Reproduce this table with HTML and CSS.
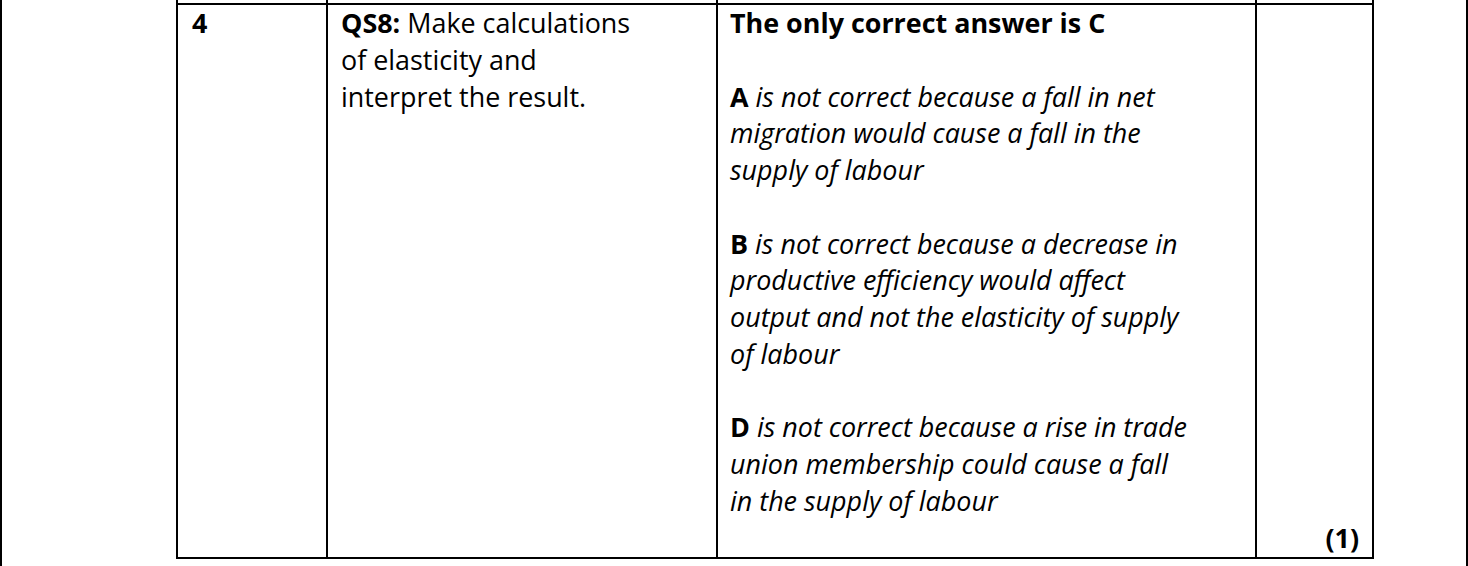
FILE: index.html
```html
<!DOCTYPE html>
<html lang="en">
<head>
<meta charset="utf-8">
<title>Mark scheme</title>
<link rel="stylesheet" href="styles.css">
</head>
<body>
<div class="page">
  <table class="scheme">
    <colgroup>
      <col class="c-num">
      <col class="c-skill">
      <col class="c-answer">
      <col class="c-mark">
    </colgroup>
    <tr class="prev">
      <td></td><td></td><td></td><td></td>
    </tr>
    <tr class="row">
      <td class="num"><b>4</b></td>
      <td class="skill"><b>QS8:</b> Make calculations<br>of elasticity and<br>interpret the result.</td>
      <td class="answer">
        <p class="lead"><b>The only correct answer is C</b></p>
        <p><b>A</b> <i>is not correct because a fall in net<br>migration would cause a fall in the<br>supply of labour</i></p>
        <p><b>B</b> <i>is not correct because a decrease in<br>productive efficiency would affect<br>output and not the elasticity of supply<br>of labour</i></p>
        <p><b>D</b> <i>is not correct because a rise in trade<br>union membership could cause a fall<br>in the supply of labour</i></p>
      </td>
      <td class="mark"><b>(1)</b></td>
    </tr>
  </table>
</div>
</body>
</html>
```
FILE: styles.css
```css
html, body {
  margin: 0;
  padding: 0;
  background: #fff;
}
.page {
  box-sizing: border-box;
  width: 1468px;
  height: 566px;
  border-left: 2px solid #000;
  border-right: 2px solid #000;
  padding-left: 174px;
  overflow: hidden;
  font-family: "Open Sans", "Liberation Sans", sans-serif;
  color: #000;
  font-size: 26.9px;
  line-height: 36.75px;
}
.scheme {
  border-collapse: collapse;
  table-layout: fixed;
  width: 1198px;
}
.c-num { width: 150px; }
.c-skill { width: 390px; }
.c-answer { width: 539px; }
.c-mark { width: 117px; }
.scheme td {
  border: 2px solid #000;
  padding: 0;
  vertical-align: top;
}
.prev td {
  border-top: none;
  height: 3px;
}
.row td {
  padding: 0 12px 0 13px;
}
.row .num { padding-left: 14px; }
.row .answer { padding-bottom: 37px; padding-left: 12px; padding-right: 4px; }
.answer p {
  margin: 0 0 36.75px 0;
}
.answer p:last-child { margin-bottom: 0; }
.row .mark {
  vertical-align: bottom;
  text-align: right;
  padding-right: 13px;
}
```
